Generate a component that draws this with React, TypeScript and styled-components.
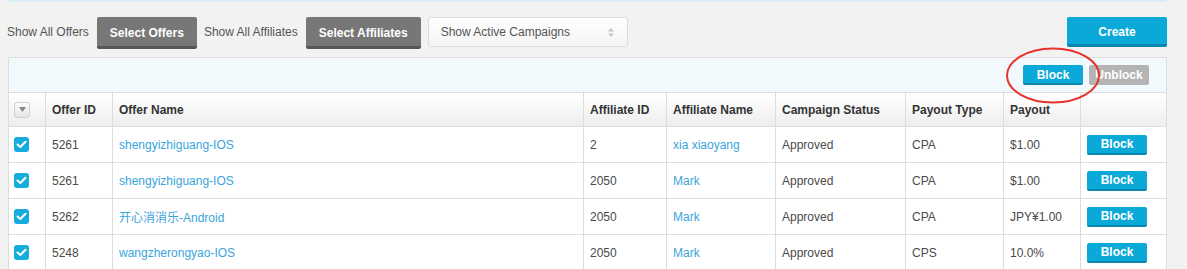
import React from "react";
import styled, { createGlobalStyle, css } from "styled-components";

const GlobalStyle = createGlobalStyle`
  html, body { margin: 0; padding: 0; background: #f2f2f2; }
  body {
    font-family: "Liberation Sans", Arial, "Noto Sans CJK SC", sans-serif;
    font-size: 12px;
    color: #444;
  }
  * { box-sizing: border-box; }
`;

const Page = styled.div`
  padding: 0 20px 0 8px;
`;

const TopStrip = styled.div`
  height: 2px;
  background: #d9ecf6;
  border-radius: 0 0 3px 3px;
`;

const Toolbar = styled.div`
  display: flex;
  align-items: flex-start;
  margin: 15px 0 8px -1px;
  height: 32px;
`;

const Label = styled.span`
  line-height: 31px;
  color: #555;
  margin-right: 8px;
  white-space: nowrap;
`;

const DarkButton = styled.button`
  height: 32px;
  padding: 2px 13px 0;
  margin-right: 7px;
  border: none;
  border-bottom: 3px solid #575757;
  border-radius: 2px;
  background: #777;
  color: #fff;
  font: bold 12px "Liberation Sans", Arial, sans-serif;
  cursor: pointer;
`;

const SelectBox = styled.div`
  width: 200px;
  height: 30px;
  display: flex;
  align-items: center;
  justify-content: space-between;
  padding: 0 13px 0 12px;
  border: 1px solid #ddd;
  border-radius: 3px;
  background: linear-gradient(#fff, #f4f4f4);
  color: #555;
  font-size: 12px;
`;

const Spacer = styled.div`
  flex: 1;
`;

const PrimaryButton = styled.button`
  width: 100px;
  height: 30px;
  padding: 2px 0 0;
  border: none;
  border-bottom: 3px solid #0a87ad;
  border-radius: 2px;
  background: #0aa9d8;
  color: #fff;
  font: bold 12px "Liberation Sans", Arial, sans-serif;
  cursor: pointer;
`;

const Panel = styled.div`
  border: 1px solid #ddd;
  border-bottom: none;
  background: #fff;
`;

const PanelHead = styled.div`
  position: relative;
  height: 35px;
  display: flex;
  align-items: center;
  justify-content: flex-end;
  gap: 6px;
  padding-right: 17px;
  background: #f2f9fc;
  border-bottom: 1px solid #ddd;
`;

const SmallButton = styled.button<{ $muted?: boolean }>`
  width: 60px;
  height: 20px;
  padding: 1px 0 0;
  border: none;
  border-radius: 2px;
  color: #fff;
  font: bold 12px "Liberation Sans", Arial, sans-serif;
  cursor: pointer;
  ${(p) =>
    p.$muted
      ? css`
          background: #b4b4b4;
          border-bottom: 2px solid #b4b4b4;
        `
      : css`
          background: #0aa9d8;
          border-bottom: 2px solid #0a87ad;
        `}
`;

const Highlight = styled.svg`
  position: absolute;
  left: 996px;
  top: -11px;
  width: 96px;
  height: 57px;
  pointer-events: none;
  z-index: 2;
  overflow: visible;
`;

const Table = styled.table`
  width: 100%;
  table-layout: fixed;
  border-collapse: separate;
  border-spacing: 0;
`;

const HeadCell = styled.th<{ $w: number }>`
  width: ${(p) => p.$w}px;
  height: 34px;
  padding: 0 6px;
  text-align: left;
  font-weight: bold;
  color: #333;
  background: linear-gradient(#fff, #eeeeee);
  border-bottom: 1px solid #ddd;
  border-right: 1px solid #ddd;
  white-space: nowrap;
  &:first-child { padding-left: 5px; }
  &:last-child { border-right: none; }
`;

const Cell = styled.td`
  height: 36px;
  padding: 0 6px;
  border-bottom: 1px solid #ddd;
  border-right: 1px solid #ddd;
  color: #4a4a4a;
  white-space: nowrap;
  &:first-child { padding-left: 5px; }
  &:last-child { border-right: none; }
`;

const Link = styled.a`
  color: #3aa4dc;
  text-decoration: none;
`;

const HeadToggle = styled.span`
  display: inline-flex;
  width: 16px;
  height: 16px;
  align-items: center;
  justify-content: center;
  border: 1px solid #d0d0d0;
  border-radius: 3px;
  background: linear-gradient(#fdfdfd, #e6e6e6);
  vertical-align: middle;
`;

const Check = styled.span`
  display: inline-flex;
  width: 15px;
  height: 15px;
  align-items: center;
  justify-content: center;
  border-radius: 3px;
  background: #16abdd;
  vertical-align: middle;
`;

const RowButton = styled(SmallButton)`
  display: block;
`;

const columns: [string, number][] = [
  ["", 37],
  ["Offer ID", 67],
  ["Offer Name", 471],
  ["Affiliate ID", 83],
  ["Affiliate Name", 109],
  ["Campaign Status", 130],
  ["Payout Type", 98],
  ["Payout", 77],
  ["", 85],
];

const rows = [
  { id: "5261", name: "shengyizhiguang-IOS", aff: "2", affName: "xia xiaoyang", status: "Approved", type: "CPA", payout: "$1.00" },
  { id: "5261", name: "shengyizhiguang-IOS", aff: "2050", affName: "Mark", status: "Approved", type: "CPA", payout: "$1.00" },
  { id: "5262", name: "开心消消乐-Android", aff: "2050", affName: "Mark", status: "Approved", type: "CPA", payout: "JPY¥1.00" },
  { id: "5248", name: "wangzherongyao-IOS", aff: "2050", affName: "Mark", status: "Approved", type: "CPS", payout: "10.0%" },
];

export default function App() {
  return (
    <>
      <GlobalStyle />
      <Page>
        <TopStrip />
        <Toolbar>
          <Label>Show All Offers</Label>
          <DarkButton>Select Offers</DarkButton>
          <Label>Show All Affiliates</Label>
          <DarkButton>Select Affiliates</DarkButton>
          <SelectBox>
            <span>Show Active Campaigns</span>
            <svg width="6" height="9" viewBox="0 0 6 9">
              <path d="M3 0 L6 3.5 L0 3.5 Z M3 9 L6 5.5 L0 5.5 Z" fill="#c4c4c4" />
            </svg>
          </SelectBox>
          <Spacer />
          <PrimaryButton>Create</PrimaryButton>
        </Toolbar>
        <Panel>
          <PanelHead>
            <SmallButton>Block</SmallButton>
            <SmallButton $muted>Unblock</SmallButton>
            <Highlight viewBox="0 0 96 57">
              <ellipse cx="48" cy="28.5" rx="46" ry="27" fill="none" stroke="#e8322c" strokeWidth="2" />
            </Highlight>
          </PanelHead>
          <Table>
            <thead>
              <tr>
                {columns.map(([label, w], i) => (
                  <HeadCell key={i} $w={w}>
                    {i === 0 ? (
                      <HeadToggle>
                        <svg width="7" height="5" viewBox="0 0 7 5">
                          <path d="M0 0 L7 0 L3.5 5 Z" fill="#888" />
                        </svg>
                      </HeadToggle>
                    ) : (
                      label
                    )}
                  </HeadCell>
                ))}
              </tr>
            </thead>
            <tbody>
              {rows.map((r, i) => (
                <tr key={i}>
                  <Cell>
                    <Check>
                      <svg width="11" height="9" viewBox="0 0 11 9">
                        <path d="M1.5 4.5 L4.3 7 L9.5 1.8" fill="none" stroke="#fff" strokeWidth="2" strokeLinecap="round" strokeLinejoin="round" />
                      </svg>
                    </Check>
                  </Cell>
                  <Cell>{r.id}</Cell>
                  <Cell>
                    <Link href="#">{r.name}</Link>
                  </Cell>
                  <Cell>{r.aff}</Cell>
                  <Cell>
                    <Link href="#">{r.affName}</Link>
                  </Cell>
                  <Cell>{r.status}</Cell>
                  <Cell>{r.type}</Cell>
                  <Cell>{r.payout}</Cell>
                  <Cell>
                    <RowButton>Block</RowButton>
                  </Cell>
                </tr>
              ))}
            </tbody>
          </Table>
        </Panel>
      </Page>
    </>
  );
}
